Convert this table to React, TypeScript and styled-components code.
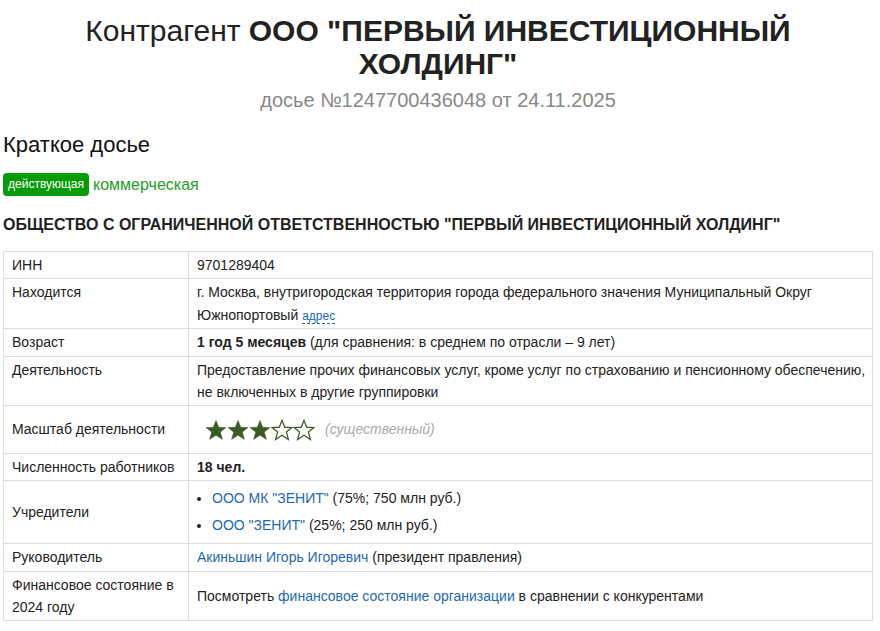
import styled, { createGlobalStyle } from "styled-components";

const GlobalStyle = createGlobalStyle`
    body {
        margin: 0;
        font-family: "Liberation Sans", Arial, sans-serif;
        color: #222;
        background: #fff;
    }
`;

const Page = styled.div`
    padding: 0 7px 0 3px;
`;

const Header = styled.header`
    text-align: center;
    padding-top: 14px;
`;

const Title = styled.h1`
    margin: 0 auto;
    max-width: 760px;
    font-size: 30px;
    line-height: 33px;
    font-weight: 400;
    color: #222;

    b {
        font-weight: 700;
    }
`;

const Subtitle = styled.div`
    margin-top: 8px;
    font-size: 20px;
    line-height: 24px;
    color: #888;
`;

const SectionTitle = styled.h2`
    margin: 20px 0 0;
    font-size: 22px;
    line-height: 26px;
    font-weight: 400;
    color: #111;
`;

const Tags = styled.div`
    display: flex;
    align-items: center;
    gap: 4px;
    margin-top: 15px;
`;

const Badge = styled.span`
    display: inline-block;
    background: #079c07;
    color: #fff;
    font-size: 12px;
    line-height: 23px;
    padding: 0 5px;
    border-radius: 4px;
`;

const TagText = styled.span`
    color: #1f9e1f;
    font-size: 16px;
`;

const FullName = styled.h3`
    margin: 19px 0 0;
    font-size: 16px;
    line-height: 20px;
    font-weight: 700;
    color: #222;
`;

const Table = styled.table`
    margin-top: 16px;
    width: 100%;
    border-collapse: collapse;
    table-layout: fixed;
    font-size: 14px;
`;

const LabelCol = styled.col`
    width: 185px;
`;

const Cell = styled.td<{ $valign?: string }>`
    border: 1px solid #ddd;
    padding: 2px 4px 2px 8px;
    line-height: 22.4px;
    vertical-align: ${p => p.$valign || "middle"};
    color: #222;
`;

const Link = styled.a`
    color: #1e68ad;
    text-decoration: none;
`;

const AddressLink = styled.a`
    color: #1e68ad;
    font-size: 12px;
    line-height: 1;
    text-decoration: none;
    border-bottom: 1px dashed #1e68ad;
`;

const Stars = styled.div`
    display: flex;
    align-items: center;
    padding: 10px 0 10px 8px;
    gap: 10px;
`;

const StarRow = styled.div`
    display: flex;
`;

const Muted = styled.i`
    color: #aaa;
`;

const Owners = styled.ul`
    margin: 2px 0;
    padding-left: 15px;
`;

const Owner = styled.li`
    line-height: 27px;
`;

function Star({ filled }: { filled: boolean }) {
    return (
        <svg width="22" height="22" viewBox="0 0 24 24">
            <polygon
                points="12,1.5 15,9 23,9.3 16.8,14.3 19,22.3 12,17.7 5,22.3 7.2,14.3 1,9.3 9,9"
                fill={filled ? "#3b5a24" : "#fff"}
                stroke="#3b5a24"
                strokeWidth={filled ? 0.5 : 1.4}
                strokeLinejoin="miter"
            />
        </svg>
    );
}

function App() {
    const rating = 3;

    return (
        <Page>
            <GlobalStyle />
            <Header>
                <Title>
                    Контрагент <b>ООО "ПЕРВЫЙ ИНВЕСТИЦИОННЫЙ ХОЛДИНГ"</b>
                </Title>
                <Subtitle>досье №1247700436048 от 24.11.2025</Subtitle>
            </Header>

            <SectionTitle>Краткое досье</SectionTitle>
            <Tags>
                <Badge>действующая</Badge>
                <TagText>коммерческая</TagText>
            </Tags>
            <FullName>ОБЩЕСТВО С ОГРАНИЧЕННОЙ ОТВЕТСТВЕННОСТЬЮ "ПЕРВЫЙ ИНВЕСТИЦИОННЫЙ ХОЛДИНГ"</FullName>

            <Table>
                <colgroup>
                    <LabelCol />
                    <col />
                </colgroup>
                <tbody>
                    <tr>
                        <Cell>ИНН</Cell>
                        <Cell>9701289404</Cell>
                    </tr>
                    <tr>
                        <Cell $valign="top">Находится</Cell>
                        <Cell>
                            г. Москва, внутригородская территория города федерального значения Муниципальный Округ
                            Южнопортовый <AddressLink href="#">адрес</AddressLink>
                        </Cell>
                    </tr>
                    <tr>
                        <Cell>Возраст</Cell>
                        <Cell>
                            <b>1 год 5 месяцев</b> (для сравнения: в среднем по отрасли – 9 лет)
                        </Cell>
                    </tr>
                    <tr>
                        <Cell $valign="top">Деятельность</Cell>
                        <Cell>
                            Предоставление прочих финансовых услуг, кроме услуг по страхованию и пенсионному обеспечению,
                            не включенных в другие группировки
                        </Cell>
                    </tr>
                    <tr>
                        <Cell>Масштаб деятельности</Cell>
                        <Cell>
                            <Stars>
                                <StarRow>
                                    {[0, 1, 2, 3, 4].map(i => (
                                        <Star key={i} filled={i < rating} />
                                    ))}
                                </StarRow>
                                <Muted>(существенный)</Muted>
                            </Stars>
                        </Cell>
                    </tr>
                    <tr>
                        <Cell>Численность работников</Cell>
                        <Cell>
                            <b>18 чел.</b>
                        </Cell>
                    </tr>
                    <tr>
                        <Cell>Учредители</Cell>
                        <Cell>
                            <Owners>
                                <Owner>
                                    <Link href="#">ООО МК "ЗЕНИТ"</Link> (75%; 750 млн руб.)
                                </Owner>
                                <Owner>
                                    <Link href="#">ООО "ЗЕНИТ"</Link> (25%; 250 млн руб.)
                                </Owner>
                            </Owners>
                        </Cell>
                    </tr>
                    <tr>
                        <Cell>Руководитель</Cell>
                        <Cell>
                            <Link href="#">Акиньшин Игорь Игоревич</Link> (президент правления)
                        </Cell>
                    </tr>
                    <tr>
                        <Cell>Финансовое состояние в 2024 году</Cell>
                        <Cell>
                            Посмотреть <Link href="#">финансовое состояние организации</Link> в сравнении с конкурентами
                        </Cell>
                    </tr>
                </tbody>
            </Table>
        </Page>
    );
}

export default App;
